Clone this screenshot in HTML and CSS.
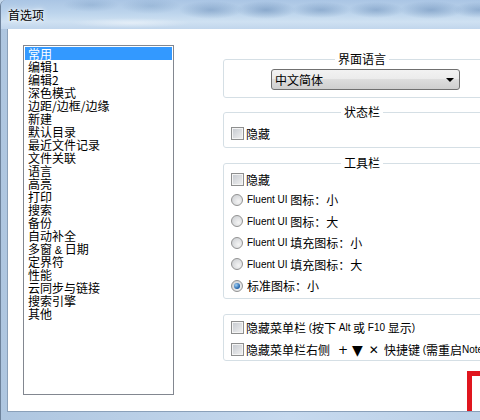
FILE: index.html
```html
<!DOCTYPE html>
<html lang="zh-CN">
<head>
    <meta charset="UTF-8">
    <meta name="viewport" content="width=device-width, initial-scale=1.0">
    <title>首选项</title>
    <link rel="stylesheet" href="styles.css">
</head>
<body>

    <div class="window">
        <div class="titlebar">
            <span class="title">首选项</span>
        </div>

        <div class="frame">
            <div class="client">

                <!-- Category list -->
                <ul class="category-list">
                    <li class="selected">常用</li>
                    <li>编辑1</li>
                    <li>编辑2</li>
                    <li>深色模式</li>
                    <li>边距/边框/边缘</li>
                    <li>新建</li>
                    <li>默认目录</li>
                    <li>最近文件记录</li>
                    <li>文件关联</li>
                    <li>语言</li>
                    <li>高亮</li>
                    <li>打印</li>
                    <li>搜索</li>
                    <li>备份</li>
                    <li>自动补全</li>
                    <li>多窗 <span class="amp">&amp;</span> 日期</li>
                    <li>定界符</li>
                    <li>性能</li>
                    <li>云同步与链接</li>
                    <li>搜索引擎</li>
                    <li>其他</li>
                </ul>

                <!-- Options for the selected page -->
                <div class="options">
                    <fieldset class="group group-lang">
                        <legend>界面语言</legend>
                        <div class="combo">
                            <span>中文简体</span>
                            <span class="combo-arrow"></span>
                        </div>
                    </fieldset>

                    <fieldset class="group group-status">
                        <legend>状态栏</legend>
                        <label class="row"><span class="check"></span>隐藏</label>
                    </fieldset>

                    <fieldset class="group group-toolbar">
                        <legend>工具栏</legend>
                        <label class="row row-first"><span class="check"></span>隐藏</label>
                        <label class="row row-radio"><span class="radio"></span><span class="latin">Fluent UI</span>&nbsp;图标：小</label>
                        <label class="row row-radio"><span class="radio"></span><span class="latin">Fluent UI</span>&nbsp;图标：大</label>
                        <label class="row row-radio"><span class="radio"></span><span class="latin">Fluent UI</span>&nbsp;填充图标：小</label>
                        <label class="row row-radio"><span class="radio"></span><span class="latin">Fluent UI</span>&nbsp;填充图标：大</label>
                        <label class="row row-radio"><span class="radio checked"></span>标准图标：小</label>
                    </fieldset>

                    <fieldset class="group group-menu">
                        <label class="row"><span class="check"></span>隐藏菜单栏&nbsp;<span class="latin">(</span>按下&nbsp;<span class="latin">Alt</span>&nbsp;或&nbsp;<span class="latin">F10</span>&nbsp;显示<span class="latin">)</span></label>
                        <label class="row"><span class="check"></span>隐藏菜单栏右侧<span class="sym sym-plus">+</span><span class="sym sym-down">▼</span><span class="sym sym-close">✕</span><span class="after-sym">快捷键</span>&nbsp;<span class="latin">(</span>需重启<span class="latin">Notepad3</span>生效<span class="latin">)</span></label>
                    </fieldset>
                </div>

                <!-- Highlight box in the lower right -->
                <div class="marker"></div>
            </div>
        </div>
    </div>

</body>
</html>
```

FILE: styles.css
```css
* {
    box-sizing: border-box;
    margin: 0;
    padding: 0;
}

body {
    font-family: "Noto Sans CJK SC", sans-serif;
    font-size: 12px;
    color: #000;
    width: 480px;
    height: 420px;
    overflow: hidden;
    background: #c4d8ed;
}

.window {
    width: 480px;
    height: 420px;
    display: flex;
    flex-direction: column;
    overflow: hidden;
    border-left: 1px solid #6d829b;
    border-top-left-radius: 6px;
    background: linear-gradient(90deg, #aec6e0, #c6d9ee 60%, #bcd1e8);
}

/* Aero glass title bar, blurred windows showing through */
.titlebar {
    height: 29px;
    flex: none;
    display: flex;
    align-items: center;
    padding-left: 7px;
    background:
        radial-gradient(ellipse 28px 7px at 90px 5px, rgba(90, 130, 175, 0.25), transparent),
        radial-gradient(ellipse 30px 8px at 150px 6px, rgba(90, 130, 175, 0.25), transparent),
        radial-gradient(ellipse 32px 9px at 210px 10px, rgba(70, 110, 160, 0.35), transparent),
        radial-gradient(ellipse 30px 9px at 265px 10px, rgba(70, 110, 160, 0.4), transparent),
        radial-gradient(ellipse 30px 8px at 320px 10px, rgba(70, 110, 160, 0.35), transparent),
        radial-gradient(ellipse 28px 8px at 375px 10px, rgba(70, 110, 160, 0.35), transparent),
        radial-gradient(ellipse 32px 9px at 430px 10px, rgba(70, 110, 160, 0.38), transparent),
        radial-gradient(ellipse 26px 8px at 478px 10px, rgba(70, 110, 160, 0.35), transparent),
        radial-gradient(ellipse 60px 5px at 130px 23px, rgba(255, 255, 255, 0.45), transparent),
        linear-gradient(180deg, #aac5e4 0%, #bcd4ec 45%, #cfe1f2 75%, #c1d6ec 100%);
}

.title {
    font-size: 12px;
    line-height: 14px;
    text-shadow: 0 0 6px #fff, 0 0 3px #fff;
}

.frame {
    flex: 1;
    display: flex;
    padding-left: 6px;
    padding-bottom: 8px;
}

.client {
    position: relative;
    flex: 1;
    display: flex;
    align-items: flex-start;
    padding: 16px 0 0 15px;
    background: #fff;
    border-left: 1px solid #8aa0b9;
    border-bottom: 1px solid #8aa0b9;
    overflow: hidden;
}

/* Left list box */
.category-list {
    list-style: none;
    width: 151px;
    height: 350px;
    flex: none;
    padding: 1px;
    border: 1px solid #828790;
}

.category-list li {
    height: 13px;
    line-height: 13px;
    padding-left: 3px;
    white-space: nowrap;
}

.category-list li.selected {
    background: #3399ff;
    color: #fff;
}

.amp {
    font-family: "Liberation Sans", sans-serif;
    font-size: 11px;
}

/* Right column of group boxes */
.options {
    flex: none;
    margin-left: 49px;
    padding-top: 8px;
    display: flex;
    flex-direction: column;
}

.group {
    width: 278px;
    min-width: 0;
    border: 1px solid #d5dfe5;
    border-radius: 3px;
    padding: 0 7px;
}

.group legend {
    margin: 0 auto;
    padding: 0 3px;
    font-size: 12px;
    line-height: 12px;
}

.group-lang {
    padding-top: 4px;
    padding-bottom: 7px;
}

.group-status {
    margin-top: 8px;
    padding-top: 7px;
    padding-bottom: 6px;
}

.group-toolbar {
    margin-top: 9px;
    padding-bottom: 1px;
}

.group-menu {
    margin-top: 15px;
    padding-top: 3px;
    display: flex;
    flex-direction: column;
    gap: 2px;
}

/* Combo box */
.combo {
    width: 189px;
    height: 21px;
    margin-left: 40px;
    display: flex;
    align-items: center;
    justify-content: space-between;
    padding: 0 5px 0 3px;
    border: 1px solid #707070;
    border-radius: 3px;
    background: linear-gradient(180deg, #f2f2f2 0%, #ebebeb 50%, #dddddd 50%, #cfcfcf 100%);
}

.combo-arrow {
    width: 0;
    height: 0;
    border-left: 4px solid transparent;
    border-right: 4px solid transparent;
    border-top: 4px solid #000;
}

/* Check and radio rows */
.row {
    display: flex;
    align-items: center;
    height: 20px;
    white-space: nowrap;
}

.group-status .row {
    height: 16px;
}

.row-radio {
    height: 21.5px;
}

.check {
    width: 13px;
    height: 13px;
    flex: none;
    margin-right: 2px;
    border: 1px solid #8e8f8f;
    background: linear-gradient(135deg, #c4c8ce, #f2f2f2);
    box-shadow: inset 0 0 0 1px #f4f4f4;
}

.radio {
    width: 12px;
    height: 12px;
    flex: none;
    margin-right: 4px;
    border: 1px solid #929292;
    border-radius: 50%;
    background: radial-gradient(circle at 65% 65%, #f4f4f4, #c8cbcf);
    display: flex;
    align-items: center;
    justify-content: center;
}

.radio.checked::after {
    content: "";
    width: 6px;
    height: 6px;
    border-radius: 50%;
    background: radial-gradient(circle at 35% 35%, #9fd0f5, #1f5fa6 70%);
}

.latin {
    font-family: "Liberation Sans", sans-serif;
    font-size: 10px;
}

.sym {
    font-family: "DejaVu Sans", sans-serif;
    font-size: 12px;
}

.sym-plus {
    margin-left: 8px;
}

.sym-down {
    margin-left: 4px;
    font-size: 14px;
}

.sym-close {
    margin-left: 6px;
}

.after-sym {
    margin-left: 5px;
}

/* Red outline box, clipped by the client edge */
.marker {
    position: absolute;
    left: 459px;
    top: 342px;
    width: 40px;
    height: 50px;
    border: 5px solid #e0161e;
}
```
